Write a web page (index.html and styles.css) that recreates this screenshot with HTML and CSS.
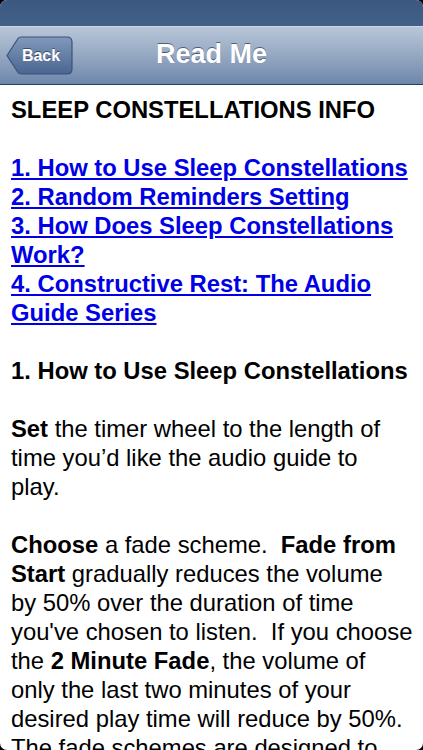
FILE: index.html
```html
<!DOCTYPE html>
<html>
<head>
<meta charset="utf-8">
<link rel="stylesheet" href="styles.css">
</head>
<body>
<div class="screen">
  <div class="status"></div>
  <div class="navbar">
    <div class="back">
      <svg class="back-shape" width="68" height="40" viewBox="0 0 68 40">
        <defs>
          <linearGradient id="bg" x1="0" y1="0" x2="0" y2="1">
            <stop offset="0" stop-color="#8199bb"/>
            <stop offset="1" stop-color="#4a6590"/>
          </linearGradient>
        </defs>
        <path d="M1 19.5 L12 2.5 Q13 1 15 1 L61 1 Q66 1 66 6 L66 33 Q66 38 61 38 L15 38 Q13 38 12 36.5 Z" fill="url(#bg)" stroke="#3a5278" stroke-width="1.2"/>
      </svg>
      <span class="back-label">Back</span>
    </div>
    <div class="title">Read Me</div>
  </div>
  <div class="content">
    <p class="gap"><b>SLEEP CONSTELLATIONS INFO</b></p>
    <p class="gap links">
      <a href="#a">1. How to Use Sleep Constellations</a><br>
      <a href="#b">2. Random Reminders Setting</a><br>
      <a href="#c">3. How Does Sleep Constellations<br>Work?</a><br>
      <a href="#d">4. Constructive Rest: The Audio<br>Guide Series</a>
    </p>
    <p class="gap"><b>1. How to Use Sleep Constellations</b></p>
    <p class="gap"><b>Set</b> the timer wheel to the length of<br>time you’d like the audio guide to<br>play.</p>
    <p class="gap"><b>Choose</b> a fade scheme.&nbsp; <b>Fade from<br>Start</b> gradually reduces the volume<br>by 50% over the duration of time<br>you've chosen to listen.&nbsp; If you choose<br>the <b>2 Minute Fade</b>, the volume of<br>only the last two minutes of your<br>desired play time will reduce by 50%.<br>The fade schemes are designed to<br>help you relax.</p>
  </div>
</div>
</body>
</html>
```
FILE: styles.css
```css
html, body {
  margin: 0;
  padding: 0;
  background: #000;
}
.screen {
  width: 423px;
  height: 750px;
  overflow: hidden;
  background: #fff;
  border-radius: 7px;
  position: relative;
}
.status {
  height: 26px;
  background: linear-gradient(#3c5880, #41618a);
}
.navbar {
  height: 57px;
  border-top: 1px solid #cdd6e3;
  border-bottom: 1px solid #2b3e5c;
  background: linear-gradient(#b8c6d8, #95a8c2 50%, #6d87ab);
  position: relative;
  display: flex;
  align-items: center;
  justify-content: center;
}
.back {
  position: absolute;
  left: 6px;
  top: 9px;
  width: 68px;
  height: 40px;
}
.back-shape {
  display: block;
}
.back-label {
  position: absolute;
  left: 1px;
  top: 0;
  width: 68px;
  height: 39px;
  display: flex;
  align-items: center;
  justify-content: center;
  font-family: "Liberation Sans", Arial, sans-serif;
  font-weight: bold;
  font-size: 16px;
  color: #fff;
  text-shadow: 0 -1px 0 rgba(0,0,0,0.45);
}
.title {
  font-family: "Liberation Sans", Arial, sans-serif;
  font-weight: bold;
  font-size: 27px;
  color: #fff;
  text-shadow: 0 -1px 0 rgba(40,55,80,0.7);
  margin-top: -2px;
}
.content {
  padding: 10px 11px 0 11px;
  font-family: "Liberation Sans", Arial, Helvetica, sans-serif;
  font-size: 23.8px;
  line-height: 29px;
  color: #000;
  white-space: nowrap;
}
.content p {
  margin: 0;
}
.content p.gap {
  margin-bottom: 29px;
}
.links a {
  color: #0000e6;
  text-decoration: underline;
  font-weight: bold;
}
```
